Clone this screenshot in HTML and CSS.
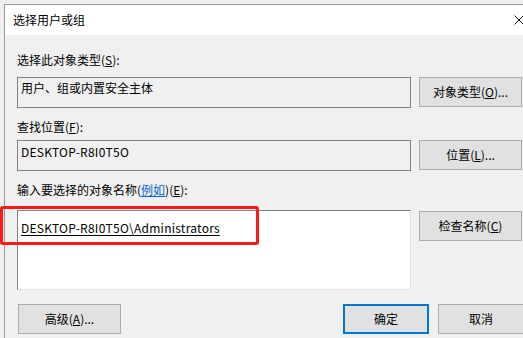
FILE: index.html
```html
<!DOCTYPE html>
<html lang="zh-CN">
<head>
<meta charset="utf-8">
<title>选择用户或组</title>
<link rel="stylesheet" href="styles.css">
</head>
<body>
<div class="window">
  <div class="titlebar">
    <span class="title">选择用户或组</span>
    <svg class="close" width="10" height="10" viewBox="0 0 10 10"><path d="M0.5 0.5 L9.5 9.5 M9.5 0.5 L0.5 9.5" stroke="#111" stroke-width="1" fill="none"/></svg>
  </div>
  <div class="content">
    <div class="label l1">选择此对象类型(<u>S</u>):</div>
    <div class="row r1">
      <div class="field">用户、组或内置安全主体</div>
      <button class="btn">对象类型(<u>O</u>)...</button>
    </div>
    <div class="label l2">查找位置(<u>F</u>):</div>
    <div class="row r2">
      <div class="field latin">DESKTOP-R8I0T5O</div>
      <button class="btn">位置(<u>L</u>)...</button>
    </div>
    <div class="label l3">输入要选择的对象名称(<span class="link">例如</span>)(<u>E</u>):</div>
    <div class="row r3">
      <div class="edit"><span class="name latin">DESKTOP-R8I0T5O\Administrators</span></div>
      <button class="btn">检查名称(<u>C</u>)</button>
    </div>
    <div class="footer">
      <button class="btn wide">高级(<u>A</u>)...</button>
      <div class="right">
        <button class="btn small default">确定</button>
        <button class="btn small">取消</button>
      </div>
    </div>
  </div>
</div>
<div class="highlight"></div>
</body>
</html>
```
FILE: styles.css
```css
html, body {
  margin: 0;
  padding: 0;
  width: 523px;
  height: 338px;
  overflow: hidden;
  background: #f0f0f0;
  font-family: "Noto Sans CJK SC", "Noto Sans", sans-serif;
  font-size: 12px;
  color: #000;
}
body { position: relative; }
.window {
  margin: 4px 0 0 4px;
  width: 519px;
  height: 340px;
  border-left: 1px solid #9a9a9a;
  border-top: 1px solid #9a9a9a;
  background: #f0f0f0;
}
.titlebar {
  height: 30px;
  background: #fff;
  display: flex;
  align-items: center;
  justify-content: space-between;
  padding-left: 8px;
}
.title { line-height: 16px; }
.close { display: block; }
.content {
  padding: 17px 0 0 12px;
  display: flex;
  flex-direction: column;
}
.label { line-height: 16px; height: 16px; }
u { text-decoration: underline; text-underline-offset: 1px; }
.link { color: #0066cc; text-decoration: underline; text-underline-offset: 1px; }
.row {
  display: flex;
  align-items: flex-start;
  gap: 8px;
}
.r1 { margin-top: 9px; }
.l2 { margin-top: 11px; }
.r2 { margin-top: 5px; }
.l3 { margin-top: 11px; }
.r3 { margin-top: 12px; }
.field {
  box-sizing: border-box;
  width: 394px;
  height: 31px;
  border: 1px solid #828282;
  background: #f0f0f0;
  padding: 2px 3px;
  line-height: 16px;
}
.latin { letter-spacing: 0.25px; }
.field.latin { padding-top: 3px; }
.edit {
  box-sizing: border-box;
  width: 394px;
  height: 80px;
  border: 1px solid #e3e3e3;
  border-top-color: #828282;
  border-left-color: #828282;
  background: #fff;
  padding: 9px 3px 0;
  line-height: 16px;
}
.name { text-decoration: underline; text-underline-offset: 2px; }
.btn {
  box-sizing: border-box;
  width: 103px;
  height: 30px;
  margin: 0;
  padding: 0;
  border: 1px solid #adadad;
  background: #e1e1e1;
  font: inherit;
  color: #000;
  line-height: 16px;
}
.r3 .btn { margin-top: 1px; }
.footer {
  margin-top: 14px;
  display: flex;
  justify-content: space-between;
  padding-left: 1px;
}
.right { display: flex; gap: 9px; }
.btn.small { width: 86px; }
.btn.default { border: 2px solid #0078d7; }
.highlight {
  position: absolute;
  left: 0;
  top: 206px;
  width: 259px;
  height: 39px;
  box-sizing: border-box;
  border: 3px solid #fb1a1a;
  border-radius: 3px;
}
```
